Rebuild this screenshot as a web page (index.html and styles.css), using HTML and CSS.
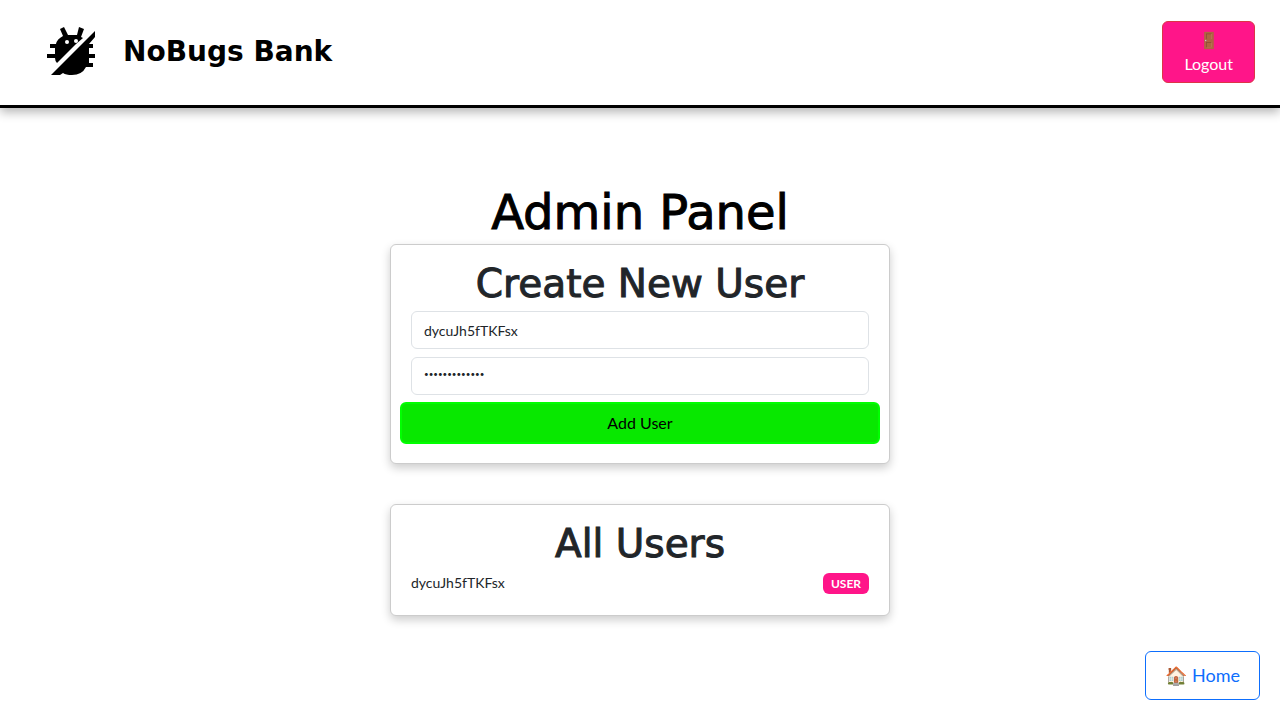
FILE: index.html
```html
<!DOCTYPE html>
<html lang="en">
<head>
<meta charset="utf-8">
<meta name="viewport" content="width=device-width, initial-scale=1">
<title>NoBugs Bank</title>
<link rel="stylesheet" href="styles.css">
</head>
<body>
<header class="header">
  <div class="brand">
    <svg class="logo" viewBox="0 0 50 50" aria-hidden="true">
      <path d="M14 2L18 0L22 8H31L33 0L38 2L35 10L37 11L30 17L11 36Q9 34 9 31H1V27H9V21H4V17H10Q11 12 17 9Z"/>
      <path d="M49 4V10L43 17H47V21H43V27H49V31H43V36H47V40H40Q36 48 26 48Q20 48 17 46L14 48H5Z"/>
      <circle class="logo-cut" cx="21" cy="15" r="2"/>
      <circle class="logo-cut" cx="30" cy="14" r="2"/>
    </svg>
    <span class="brand-name">NoBugs Bank</span>
  </div>
  <button class="logout" type="button"><span>🚪</span><span>Logout</span></button>
</header>
<main class="main">
  <h1 class="title">Admin Panel</h1>
  <section class="card">
    <h2 class="card-title">Create New User</h2>
    <form class="form">
      <input class="field" type="text" aria-label="Username" value="dycuJh5fTKFsx">
      <input class="field field-secret" type="password" aria-label="Password" value="dycuJh5fTKFsx">
      <button class="add" type="button">Add User</button>
    </form>
  </section>
  <section class="card">
    <h2 class="card-title">All Users</h2>
    <ul class="users">
      <li class="user"><span class="user-name">dycuJh5fTKFsx</span><span class="badge">USER</span></li>
    </ul>
  </section>
</main>
<button class="home" type="button">🏠 Home</button>
</body>
</html>
```
FILE: styles.css
```css
* { box-sizing: border-box; }
body {
  margin: 0;
  background: #fff;
  color: #212529;
  font-family: Lato, "Liberation Sans", sans-serif;
  font-size: 16px;
  line-height: 24px;
}
button, input { font: inherit; }
.header {
  display: flex;
  justify-content: space-between;
  align-items: center;
  padding: 21px 25px 22px 46px;
  border-bottom: 3px solid #000;
  box-shadow: 0 4px 10px rgba(0, 0, 0, 0.3);
}
.brand { display: flex; align-items: center; gap: 27px; color: #000; }
.logo { width: 50px; height: 50px; }
.logo-cut { fill: #fff; }
.brand-name {
  font-family: "DejaVu Sans", sans-serif;
  font-size: 28px;
  font-weight: 700;
  line-height: 32px;
}
.logout {
  display: flex;
  flex-direction: column;
  align-items: center;
  padding: 6px 21px;
  border: 1px solid #dc3545;
  border-radius: 6px;
  background: #ff1589;
  color: #fff;
}
.main {
  display: flex;
  flex-direction: column;
  align-items: center;
  padding: 80px 20px 40px;
}
.title {
  margin: 0 0 8px;
  color: #000;
  font-family: "DejaVu Sans", sans-serif;
  font-size: 48px;
  font-weight: 400;
  line-height: 48px;
  -webkit-text-stroke: 1px currentColor;
}
.card {
  width: 100%;
  max-width: 500px;
  padding: 20px;
  border: 1px solid #ccc;
  border-radius: 6px;
  background: #fff;
  box-shadow: 0 4px 10px rgba(0, 0, 0, 0.2);
}
.card + .card { margin-top: 40px; }
.card-title {
  margin: 0 0 8px;
  font-family: "DejaVu Sans", sans-serif;
  font-size: 39px;
  font-weight: 400;
  line-height: 38px;
  text-align: center;
  -webkit-text-stroke: 1px currentColor;
}
.form { display: flex; flex-direction: column; gap: 8px; }
.field {
  width: 100%;
  height: 38px;
  padding: 6px 12px;
  border: 1px solid #dee2e6;
  border-radius: 6px;
  background: #fff;
  color: #212529;
  font-size: 14px;
}
.field-secret { padding-bottom: 10px; font-size: 8px; }
.add {
  margin: -1px -11px;
  padding: 7px 12px;
  border: 2px solid #0f0;
  border-radius: 6px;
  background: #08e800;
  color: #000;
}
.users { margin: 0; padding: 0; list-style: none; }
.user { display: flex; justify-content: space-between; align-items: center; }
.user-name { font-size: 14px; }
.badge {
  padding: 4px 8px;
  border-radius: 6px;
  background: #ff1589;
  color: #fff;
  font-size: 12px;
  font-weight: 700;
  line-height: 13px;
}
.home {
  position: fixed;
  right: 20px;
  bottom: 20px;
  padding: 10px 19px;
  border: 1px solid #0d6efd;
  border-radius: 6px;
  background: #fff;
  color: #0d6efd;
  font-size: 18px;
  line-height: 27px;
}
```
